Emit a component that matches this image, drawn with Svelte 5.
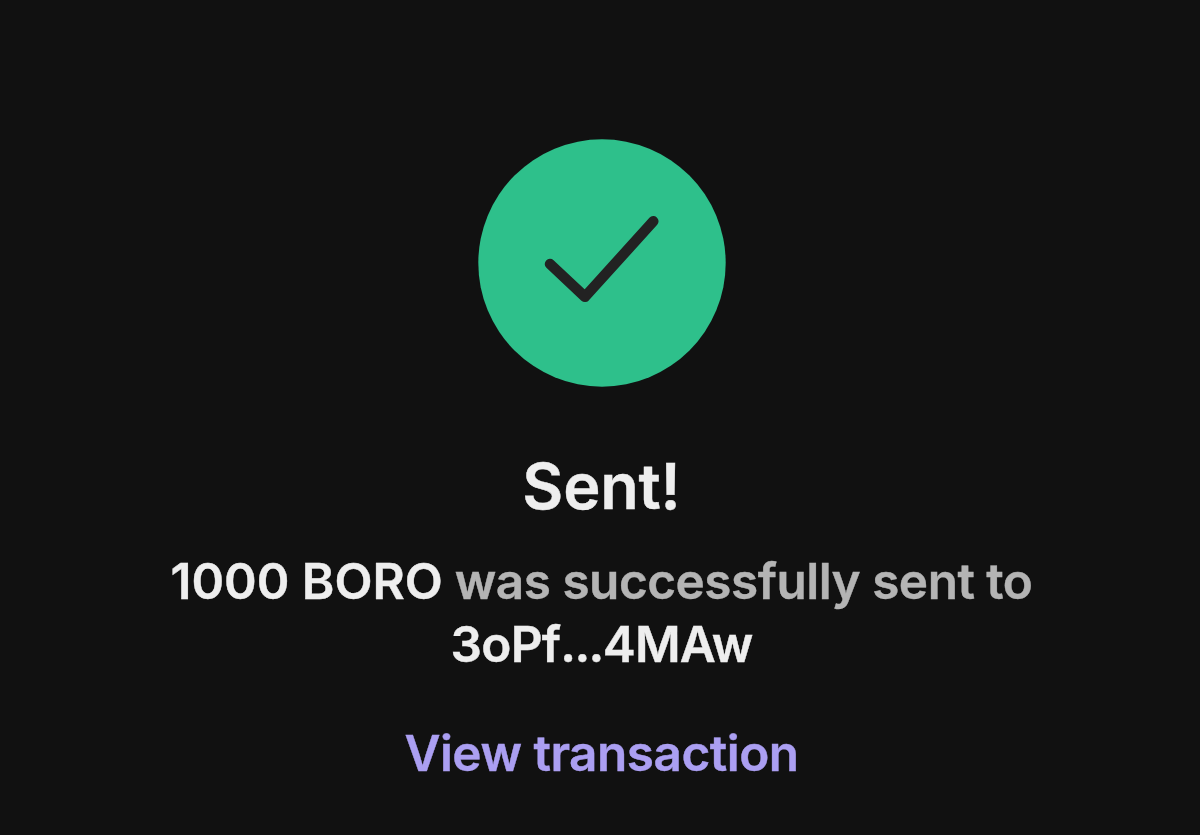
<script lang="ts">
	let { amount = '1000', token = 'BORO', recipient = ['3oPf', '4MAw'] } = $props();
</script>

<main class="sent">
	<svg class="sent-icon" viewBox="0 0 248 248" aria-hidden="true">
		<circle cx="124" cy="124" r="123.7" />
		<path d="M72 125L107 157.800L175.300 82.300" />
	</svg>
	<h1 class="sent-title">Sent!</h1>
	<p class="sent-message">
		<strong>{amount} {token}</strong> was successfully sent to
		<strong class="recipient">{recipient[0]}<span class="dots">...</span>{recipient[1]}</strong>
	</p>
	<a class="sent-link" href="#transaction">View transaction</a>
</main>

<style>
	:global(body) {
		background: #111111;
		margin: 0;
	}

	.sent {
		-webkit-text-stroke: 0.4px currentColor;
		align-items: center;
		box-sizing: border-box;
		display: flex;
		flex-direction: column;
		font-family: Inter, sans-serif;
		font-weight: 600;
		height: 835px;
		overflow: hidden;
		padding: 139px 0 0 3px;
		text-align: center;
	}

	.sent-icon {
		flex-shrink: 0;
		height: 248px;
		width: 248px;
	}

	.sent-icon circle {
		fill: #2ec08b;
	}

	.sent-icon path {
		fill: none;
		stroke: #222222;
		stroke-linecap: round;
		stroke-linejoin: round;
		stroke-width: 10.5;
	}

	.sent-title {
		color: #eeeeee;
		font-size: 63px;
		font-weight: 600;
		letter-spacing: -0.2px;
		line-height: 76px;
		margin: 61px 0 0;
	}

	.sent-message {
		color: #b4b4b4;
		font-size: 49.5px;
		letter-spacing: -0.5px;
		line-height: 63px;
		margin: 26px 0 0;
		width: 900px;
	}

	.sent-message strong {
		color: #eeeeee;
		font-weight: 600;
		letter-spacing: 0;
	}

	.sent-message .recipient {
		letter-spacing: -0.8px;
	}

	.sent-message .dots {
		letter-spacing: -1.6px;
	}

	.sent-link {
		color: #ab9ff2;
		font-size: 49.5px;
		letter-spacing: -0.5px;
		line-height: 60px;
		margin-top: 47px;
		text-decoration: none;
	}
</style>
